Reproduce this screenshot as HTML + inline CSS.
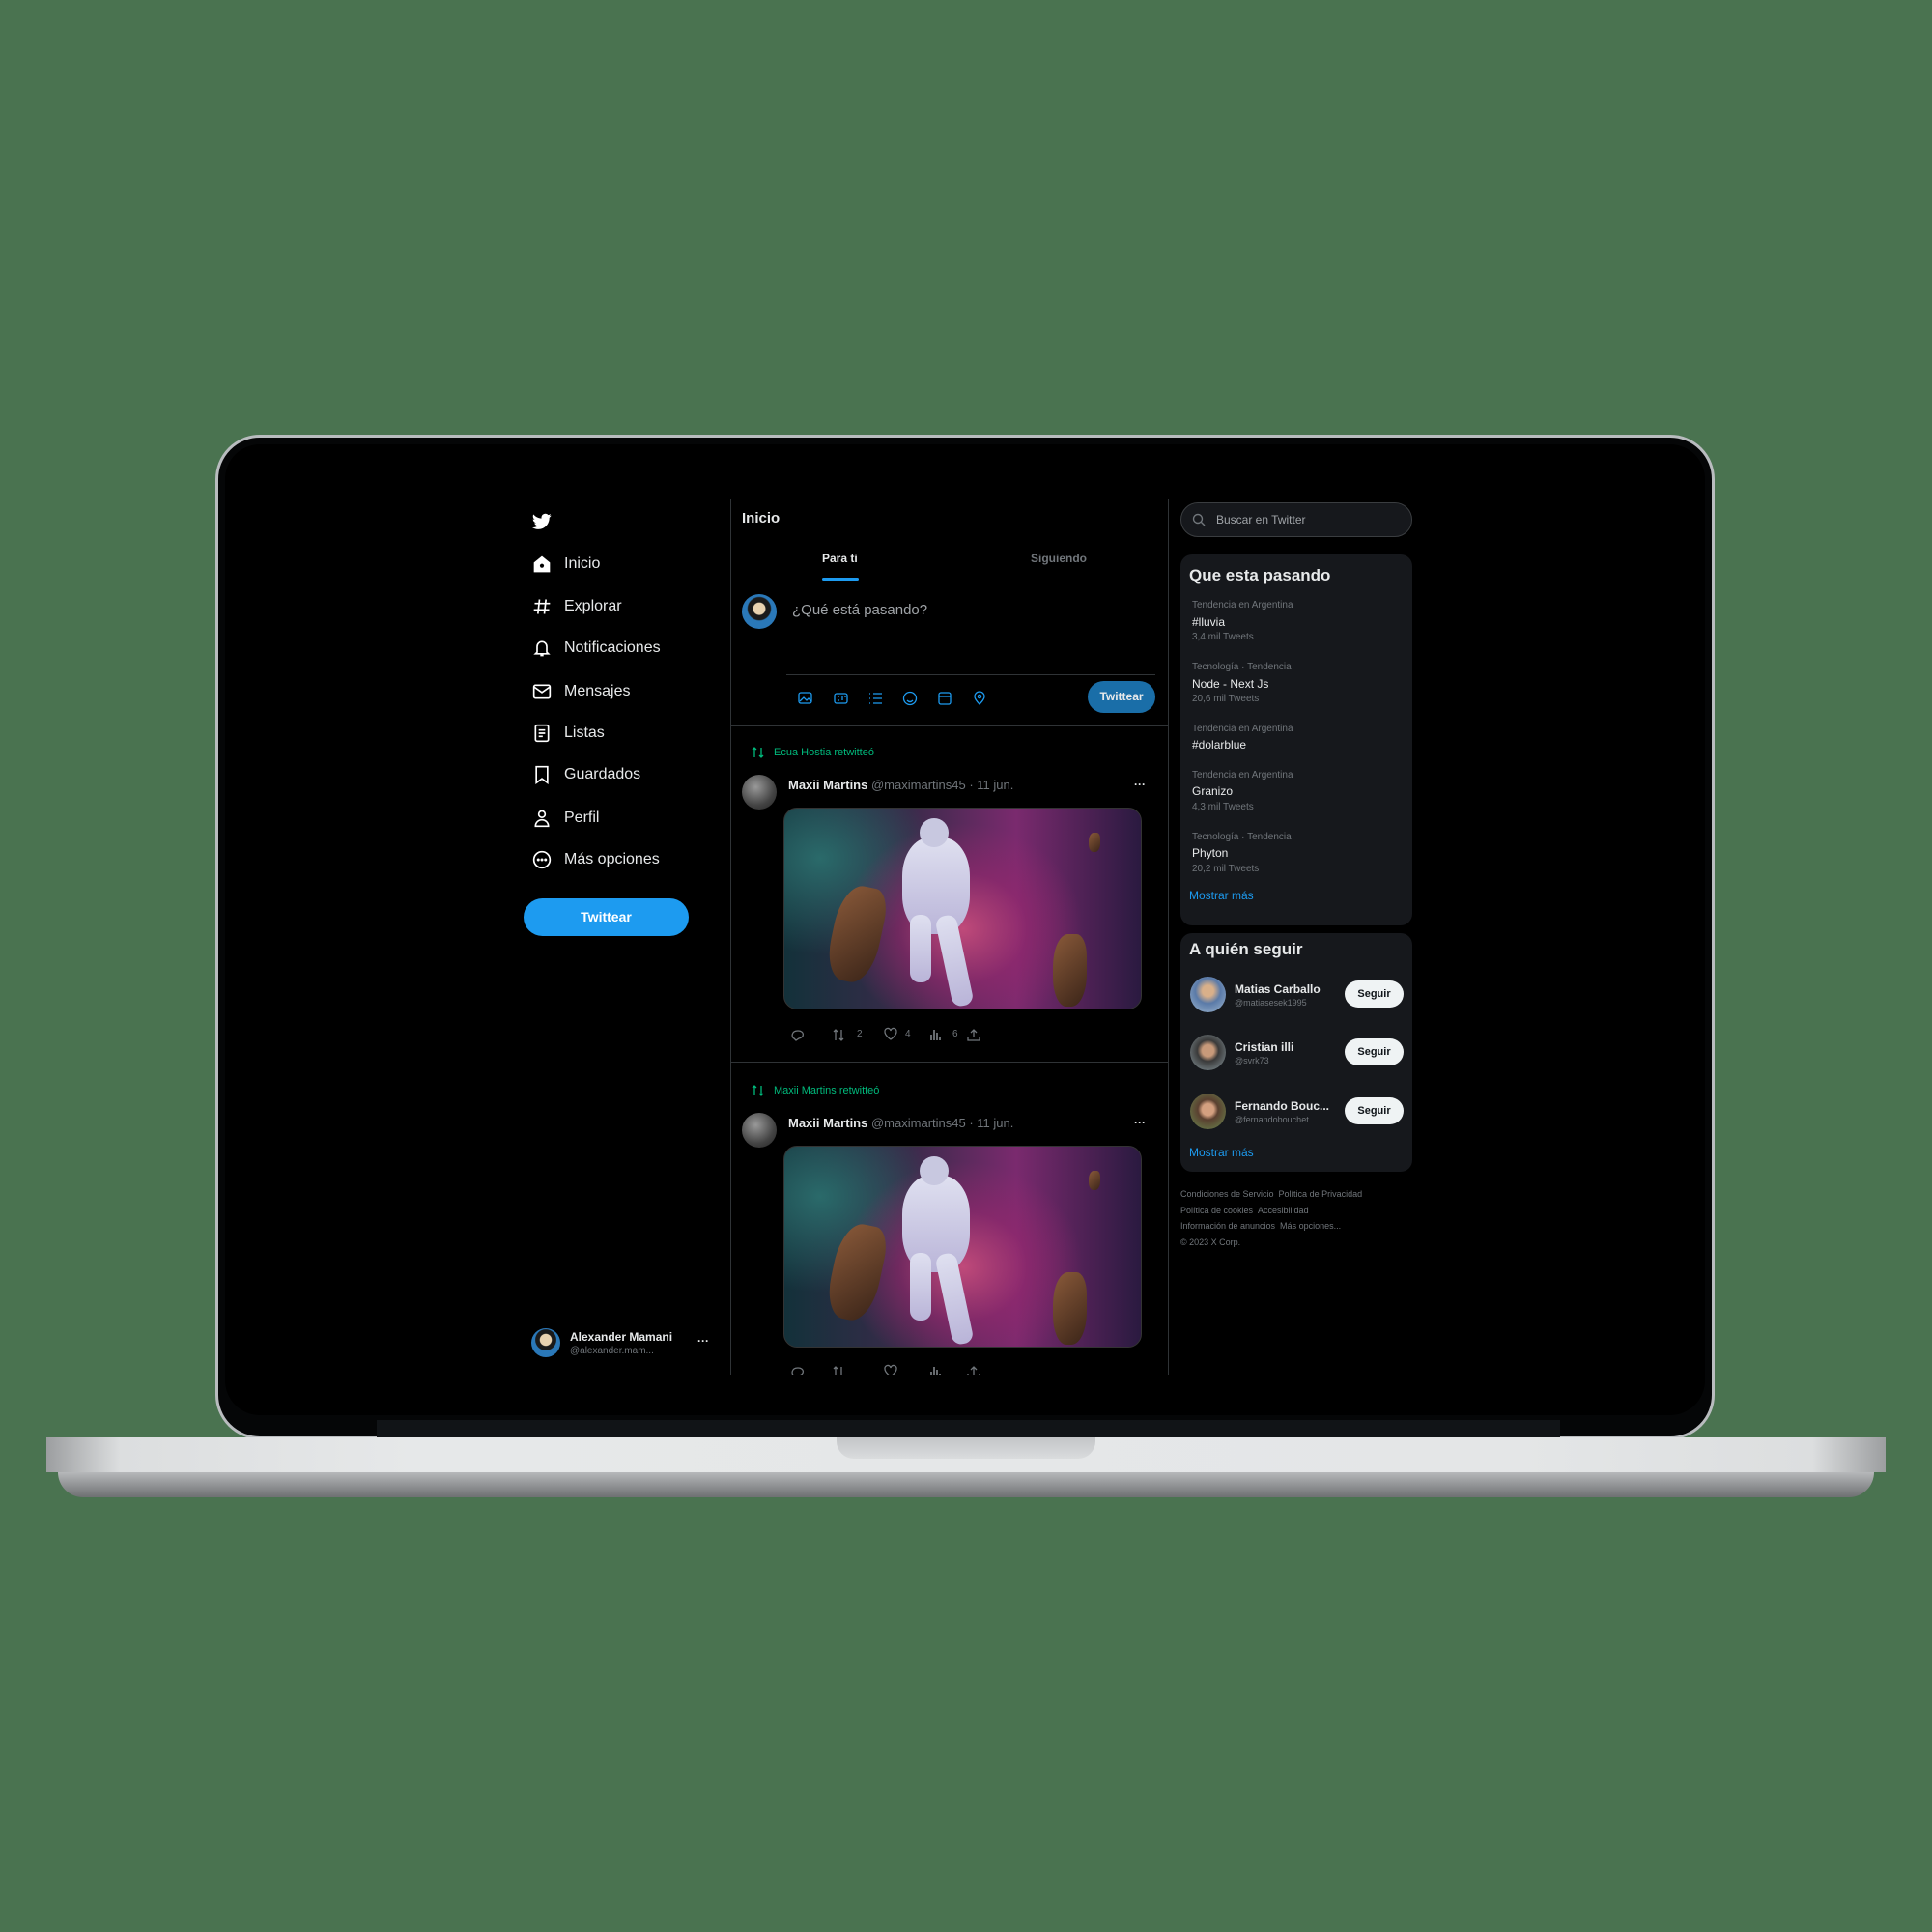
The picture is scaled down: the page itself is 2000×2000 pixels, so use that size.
<!DOCTYPE html>
<html><head><meta charset="utf-8"><style>
*{margin:0;padding:0;box-sizing:border-box}
body{width:2000px;height:2000px;background:#4a7350;position:relative;overflow:hidden;font-family:"Liberation Sans",sans-serif;color:#e7e9ea}
.a{position:absolute;white-space:nowrap}
.bez{left:223px;top:450px;width:1552px;height:1040px;background:#050607;border-radius:46px;border:3px solid #b9bcbf}
.scr{left:233px;top:460px;width:1532px;height:1005px;background:#000;border-radius:36px}
.chin{left:390px;top:1470px;width:1225px;height:18px;background:#111417}
.base{left:48px;top:1488px;width:1904px;height:36px;background:linear-gradient(90deg,#9c9ea0 0%,#dcdedf 4%,#e6e8e9 20%,#e4e6e7 80%,#dcdedf 96%,#9c9ea0 100%)}
.base2{left:60px;top:1524px;width:1880px;height:26px;background:linear-gradient(#b6b8ba,#6e7072);border-radius:0 0 40px 40px}
.notch{left:866px;top:1488px;width:268px;height:22px;background:linear-gradient(#c3c5c7,#dadcdd);border-radius:0 0 18px 18px}
.nav{font-size:16px;color:#e7e9ea}
.ic{width:20px;height:20px}
.g{color:#71767b}
.img{border-radius:14px;border:1px solid #333;overflow:hidden;background:
radial-gradient(ellipse 30% 45% at 33% 60%,rgba(160,110,60,0) 0,transparent 100%),
radial-gradient(ellipse 45% 70% at 50% 60%,#c04a7a 0%,rgba(150,40,110,.6) 40%,transparent 75%),
radial-gradient(ellipse 40% 60% at 10% 25%,#2a6a6a 0%,transparent 80%),
linear-gradient(90deg,#13313a 0%,#3a2a4a 35%,#7a2a6e 65%,#2a1a40 100%)}
.fig{position:absolute;background:linear-gradient(#dfe0f0,#b9b4d8);border-radius:40%}
.rock{position:absolute;background:linear-gradient(135deg,#8a5a3a,#3a2418);border-radius:45% 30% 45% 40%}
.box{background:#16181c;border-radius:12px}
.s10{font-size:10px;color:#71767b}
.s12{font-size:12px;color:#e7e9ea}
.btn{background:#eff3f4;color:#0f1419;font-weight:bold;font-size:11px;border-radius:14px;text-align:center;line-height:28px}
.blue{color:#1d9bf0;font-size:12px}
</style></head><body>
<div class="a bez"></div>
<div class="a scr"></div>
<div class="a chin"></div>
<div class="a base"></div>
<div class="a base2"></div>
<div class="a notch"></div>

<!-- left nav -->
<svg class="a" style="left:551px;top:531px" width="20" height="18" viewBox="0 0 24 20"><path fill="#fff" d="M23.6 2.4c-.9.4-1.8.6-2.8.8 1-.6 1.8-1.6 2.1-2.7-.9.6-2 1-3.1 1.2C18.9.7 17.6.1 16.2.1c-2.7 0-4.8 2.2-4.8 4.8 0 .4 0 .8.1 1.1C7.4 5.8 3.9 3.9 1.6 1 1.1 1.7.9 2.5.9 3.4c0 1.7.9 3.2 2.2 4-.8 0-1.5-.2-2.2-.6v.1c0 2.3 1.7 4.3 3.9 4.7-.4.1-.8.2-1.3.2-.3 0-.6 0-.9-.1.6 1.9 2.4 3.3 4.5 3.4-1.7 1.3-3.7 2.1-6 2.1H0c2.1 1.4 4.7 2.2 7.4 2.2 8.9 0 13.8-7.4 13.8-13.8v-.6c.9-.7 1.7-1.5 2.4-2.6z"/></svg>
<svg class="a ic" style="left:551px;top:574px" viewBox="0 0 24 24"><path fill="#fff" d="M12 2 2 10v12h20V10z"/><circle cx="12" cy="14" r="2.5" fill="#000"/></svg>
<div class="a nav" style="left:584px;top:575px">Inicio</div>
<svg class="a ic" style="left:551px;top:618px" viewBox="0 0 24 24" stroke="#fff" stroke-width="2" fill="none"><path d="M9 3 7 21M17 3l-2 18M3 8h19M2 16h19"/></svg>
<div class="a nav" style="left:584px;top:619px">Explorar</div>
<svg class="a ic" style="left:551px;top:661px" viewBox="0 0 24 24" stroke="#fff" stroke-width="2" fill="none"><path d="M6 17V10a6 6 0 0 1 12 0v7l2 2H4zM10 21h4"/></svg>
<div class="a nav" style="left:584px;top:662px">Notificaciones</div>
<svg class="a ic" style="left:551px;top:706px" viewBox="0 0 24 24" stroke="#fff" stroke-width="2" fill="none"><rect x="2" y="4" width="20" height="16" rx="2"/><path d="m2 6 10 7 10-7"/></svg>
<div class="a nav" style="left:584px;top:707px">Mensajes</div>
<svg class="a ic" style="left:551px;top:749px" viewBox="0 0 24 24" stroke="#fff" stroke-width="2" fill="none"><rect x="4" y="2" width="16" height="20" rx="2"/><path d="M8 8h8M8 12h8M8 16h5"/></svg>
<div class="a nav" style="left:584px;top:750px">Listas</div>
<svg class="a ic" style="left:551px;top:792px" viewBox="0 0 24 24" stroke="#fff" stroke-width="2" fill="none"><path d="M5 2h14v20l-7-5-7 5z"/></svg>
<div class="a nav" style="left:584px;top:793px">Guardados</div>
<svg class="a ic" style="left:551px;top:837px" viewBox="0 0 24 24" stroke="#fff" stroke-width="2" fill="none"><circle cx="12" cy="7" r="4"/><path d="M4 22c0-5 4-8 8-8s8 3 8 8z"/></svg>
<div class="a nav" style="left:584px;top:838px">Perfil</div>
<svg class="a ic" style="left:551px;top:880px" viewBox="0 0 24 24" stroke="#fff" stroke-width="2" fill="none"><circle cx="12" cy="12" r="10"/><circle cx="7.5" cy="12" r=".8" fill="#fff"/><circle cx="12" cy="12" r=".8" fill="#fff"/><circle cx="16.5" cy="12" r=".8" fill="#fff"/></svg>
<div class="a nav" style="left:584px;top:881px">Más opciones</div>
<div class="a" style="left:542px;top:930px;width:171px;height:39px;background:#1d9bf0;border-radius:20px;color:#fff;font-weight:bold;font-size:14px;text-align:center;line-height:39px">Twittear</div>
<div class="a" style="left:550px;top:1375px;width:30px;height:30px;border-radius:50%;background:radial-gradient(circle at 50% 40%,#e8d2b0 25%,#1a1a1a 28%,#1a1a1a 45%,#2a78b8 48%)"></div>
<div class="a" style="left:590px;top:1377px;font-size:12px;font-weight:bold">Alexander Mamani</div>
<div class="a s10" style="left:590px;top:1393px">@alexander.mam...</div>
<div class="a" style="left:722px;top:1381px;font-size:12px;font-weight:bold">···</div>

<!-- center -->
<div class="a" style="left:756px;top:517px;width:1px;height:906px;background:#2f3336"></div>
<div class="a" style="left:1209px;top:517px;width:1px;height:906px;background:#2f3336"></div>
<div class="a" style="left:768px;top:528px;font-size:15px;font-weight:bold">Inicio</div>
<div class="a" style="left:851px;top:571px;font-size:12px;font-weight:bold">Para ti</div>
<div class="a" style="left:851px;top:598px;width:38px;height:3px;background:#1d9bf0;border-radius:2px"></div>
<div class="a g" style="left:1067px;top:571px;font-size:12px;font-weight:bold">Siguiendo</div>
<div class="a" style="left:757px;top:602px;width:452px;height:1px;background:#2f3336"></div>
<div class="a" style="left:768px;top:615px;width:36px;height:36px;border-radius:50%;background:radial-gradient(circle at 50% 42%,#e8d2b0 22%,#1a1a1a 25%,#1a1a1a 42%,#2a78b8 46%)"></div>
<div class="a" style="left:820px;top:623px;font-size:15px;color:#a0a4a8">¿Qué está pasando?</div>
<div class="a" style="left:814px;top:698px;width:382px;height:1px;background:#2f3336"></div>
<svg class="a" style="left:826px;top:715px" width="200" height="16" viewBox="0 0 200 16" stroke="#1d9bf0" stroke-width="1.3" fill="none">
<rect x="1" y="2" width="13" height="11" rx="2"/><path d="m2 11 4-4 3 3 2-2 3 3"/>
<rect x="38" y="3" width="13" height="10" rx="2"/><path d="M41 6h2M41 10h2M46 6v4M48 6h2"/>
<path d="M74 3h1M74 8h1M74 13h1M78 3h9M78 8h9M78 13h9"/>
<circle cx="116" cy="8" r="6.5"/><path d="M113 10c2 2 4 2 6 0"/>
<rect x="146" y="2" width="12" height="12" rx="2"/><path d="M146 6h12"/>
<path d="M188 14s-5-5-5-8a5 5 0 0 1 10 0c0 3-5 8-5 8z"/><circle cx="188" cy="6" r="1.6"/></svg>
<div class="a" style="left:1126px;top:705px;width:70px;height:33px;background:#1a6ea8;border-radius:17px;color:#e7e9ea;font-weight:bold;font-size:12px;text-align:center;line-height:33px">Twittear</div>
<div class="a" style="left:757px;top:751px;width:452px;height:1px;background:#2f3336"></div>

<!-- tweet 1 -->
<svg class="a" style="left:778px;top:772px" width="14" height="14" viewBox="0 0 14 14" stroke="#00ba7c" stroke-width="1.3" fill="none"><path d="M3 12V2M1 4l2-2 2 2M10 2v10M8 10l2 2 2-2"/></svg>
<div class="a" style="left:801px;top:773px;font-size:11px;color:#00ba7c">Ecua Hostia retwitteó</div>
<div class="a" style="left:768px;top:802px;width:36px;height:36px;border-radius:50%;background:radial-gradient(circle at 40% 35%,#999,#444 60%,#222)"></div>
<div class="a" style="left:816px;top:805px;font-size:13px"><b>Maxii Martins</b> <span class="g">@maximartins45 · 11 jun.</span></div>
<div class="a" style="left:1174px;top:805px;font-size:12px;font-weight:bold">···</div>
<div class="a img" style="left:811px;top:836px;width:371px;height:209px">
<div class="fig" style="left:122px;top:30px;width:70px;height:100px"></div>
<div class="fig" style="left:130px;top:110px;width:22px;height:70px;border-radius:10px"></div>
<div class="fig" style="left:165px;top:110px;width:22px;height:95px;border-radius:10px;transform:rotate(-12deg)"></div>
<div class="fig" style="left:140px;top:10px;width:30px;height:30px;border-radius:50%;background:#c8c8e0"></div>
<div class="rock" style="left:50px;top:80px;width:50px;height:100px;transform:rotate(12deg)"></div>
<div class="rock" style="left:278px;top:130px;width:35px;height:75px"></div>
<div class="rock" style="left:315px;top:25px;width:12px;height:20px"></div>
</div>
<svg class="a" style="left:818px;top:1062px" width="210" height="18" viewBox="0 0 210 18" stroke="#71767b" stroke-width="1.3" fill="none">
<path d="M4 13c-3-1-3-8 4-8s7 7 1 8l-3 2z"/>
<path d="M47 15V4M45 6l2-2 2 2M53 4v11M51 13l2 2 2-2"/>
<path d="M104 14s-6-4-6-8a3 3 0 0 1 6-1 3 3 0 0 1 6 1c0 4-6 8-6 8z"/>
<path d="M146 15V9M149 15V4M152 15V7M155 15v-4" stroke-width="1.8"/>
<path d="M190 4v8M187 7l3-3 3 3M184 11v4h12v-4"/></svg>
<div class="a s10" style="left:887px;top:1065px">2</div>
<div class="a s10" style="left:937px;top:1065px">4</div>
<div class="a s10" style="left:986px;top:1065px">6</div>
<div class="a" style="left:757px;top:1099px;width:452px;height:1px;background:#2f3336"></div>

<!-- tweet 2 -->
<svg class="a" style="left:778px;top:1122px" width="14" height="14" viewBox="0 0 14 14" stroke="#00ba7c" stroke-width="1.3" fill="none"><path d="M3 12V2M1 4l2-2 2 2M10 2v10M8 10l2 2 2-2"/></svg>
<div class="a" style="left:801px;top:1123px;font-size:11px;color:#00ba7c">Maxii Martins retwitteó</div>
<div class="a" style="left:768px;top:1152px;width:36px;height:36px;border-radius:50%;background:radial-gradient(circle at 40% 35%,#999,#444 60%,#222)"></div>
<div class="a" style="left:816px;top:1155px;font-size:13px"><b>Maxii Martins</b> <span class="g">@maximartins45 · 11 jun.</span></div>
<div class="a" style="left:1174px;top:1155px;font-size:12px;font-weight:bold">···</div>
<div class="a img" style="left:811px;top:1186px;width:371px;height:209px">
<div class="fig" style="left:122px;top:30px;width:70px;height:100px"></div>
<div class="fig" style="left:130px;top:110px;width:22px;height:70px;border-radius:10px"></div>
<div class="fig" style="left:165px;top:110px;width:22px;height:95px;border-radius:10px;transform:rotate(-12deg)"></div>
<div class="fig" style="left:140px;top:10px;width:30px;height:30px;border-radius:50%;background:#c8c8e0"></div>
<div class="rock" style="left:50px;top:80px;width:50px;height:100px;transform:rotate(12deg)"></div>
<div class="rock" style="left:278px;top:130px;width:35px;height:75px"></div>
<div class="rock" style="left:315px;top:25px;width:12px;height:20px"></div>
</div>
<div class="a" style="left:757px;top:1411px;width:452px;height:12px;overflow:hidden">
<svg style="position:absolute;left:61px;top:0" width="210" height="18" viewBox="0 0 210 18" stroke="#71767b" stroke-width="1.3" fill="none">
<path d="M4 13c-3-1-3-8 4-8s7 7 1 8l-3 2z"/><path d="M47 15V4M45 6l2-2 2 2M53 4v11M51 13l2 2 2-2"/><path d="M104 14s-6-4-6-8a3 3 0 0 1 6-1 3 3 0 0 1 6 1c0 4-6 8-6 8z"/><path d="M146 15V9M149 15V4M152 15V7M155 15v-4" stroke-width="1.8"/><path d="M190 4v8M187 7l3-3 3 3M184 11v4h12v-4"/></svg></div>

<!-- right -->
<div class="a" style="left:1222px;top:520px;width:240px;height:36px;border-radius:18px;background:#16181c;border:1px solid #3a3d40"></div>
<svg class="a" style="left:1234px;top:531px" width="14" height="14" viewBox="0 0 14 14" stroke="#71767b" stroke-width="1.4" fill="none"><circle cx="6" cy="6" r="4.5"/><path d="m9.5 9.5 3.5 3.5"/></svg>
<div class="a" style="left:1259px;top:531px;font-size:12px;color:#a0a4a8">Buscar en Twitter</div>
<div class="a box" style="left:1222px;top:574px;width:240px;height:384px"></div>
<div class="a" style="left:1231px;top:586px;font-size:17px;font-weight:bold">Que esta pasando</div>
<div class="a s10" style="left:1234px;top:621px">Tendencia en Argentina</div>
<div class="a s12" style="left:1234px;top:637px">#lluvia</div>
<div class="a s10" style="left:1234px;top:654px">3,4 mil Tweets</div>
<div class="a s10" style="left:1234px;top:685px">Tecnología · Tendencia</div>
<div class="a s12" style="left:1234px;top:701px">Node - Next Js</div>
<div class="a s10" style="left:1234px;top:718px">20,6 mil Tweets</div>
<div class="a s10" style="left:1234px;top:749px">Tendencia en Argentina</div>
<div class="a s12" style="left:1234px;top:764px">#dolarblue</div>
<div class="a s10" style="left:1234px;top:797px">Tendencia en Argentina</div>
<div class="a s12" style="left:1234px;top:812px">Granizo</div>
<div class="a s10" style="left:1234px;top:830px">4,3 mil Tweets</div>
<div class="a s10" style="left:1234px;top:861px">Tecnología · Tendencia</div>
<div class="a s12" style="left:1234px;top:876px">Phyton</div>
<div class="a s10" style="left:1234px;top:894px">20,2 mil Tweets</div>
<div class="a blue" style="left:1231px;top:920px">Mostrar más</div>

<div class="a box" style="left:1222px;top:966px;width:240px;height:247px"></div>
<div class="a" style="left:1231px;top:973px;font-size:17px;font-weight:bold">A quién seguir</div>
<div class="a" style="left:1232px;top:1011px;width:37px;height:37px;border-radius:50%;background:radial-gradient(circle at 50% 40%,#d9b08a 20%,#5a7aa8 45%,#a0b8d0)"></div>
<div class="a" style="left:1278px;top:1017px;font-size:12px;font-weight:bold">Matias Carballo</div>
<div class="a" style="left:1278px;top:1033px;font-size:9px;color:#71767b">@matiasesek1995</div>
<div class="a btn" style="left:1392px;top:1015px;width:61px;height:28px">Seguir</div>
<div class="a" style="left:1232px;top:1071px;width:37px;height:37px;border-radius:50%;background:radial-gradient(circle at 50% 45%,#c89a7a 22%,#3a3a3a 40%,#8a9aa0)"></div>
<div class="a" style="left:1278px;top:1077px;font-size:12px;font-weight:bold">Cristian illi</div>
<div class="a" style="left:1278px;top:1093px;font-size:9px;color:#71767b">@svrk73</div>
<div class="a btn" style="left:1392px;top:1075px;width:61px;height:28px">Seguir</div>
<div class="a" style="left:1232px;top:1132px;width:37px;height:37px;border-radius:50%;background:radial-gradient(circle at 50% 45%,#d4a080 22%,#5a4030 38%,#6a8a50)"></div>
<div class="a" style="left:1278px;top:1138px;font-size:12px;font-weight:bold">Fernando Bouc...</div>
<div class="a" style="left:1278px;top:1154px;font-size:9px;color:#71767b">@fernandobouchet</div>
<div class="a btn" style="left:1392px;top:1136px;width:61px;height:28px">Seguir</div>
<div class="a blue" style="left:1231px;top:1186px">Mostrar más</div>

<div class="a" style="left:1222px;top:1231px;font-size:9px;color:#71767b">Condiciones de Servicio &nbsp;Política de Privacidad</div>
<div class="a" style="left:1222px;top:1248px;font-size:9px;color:#71767b">Política de cookies &nbsp;Accesibilidad</div>
<div class="a" style="left:1222px;top:1264px;font-size:9px;color:#71767b">Información de anuncios &nbsp;Más opciones...</div>
<div class="a" style="left:1222px;top:1281px;font-size:9px;color:#71767b">© 2023 X Corp.</div>
</body></html>
